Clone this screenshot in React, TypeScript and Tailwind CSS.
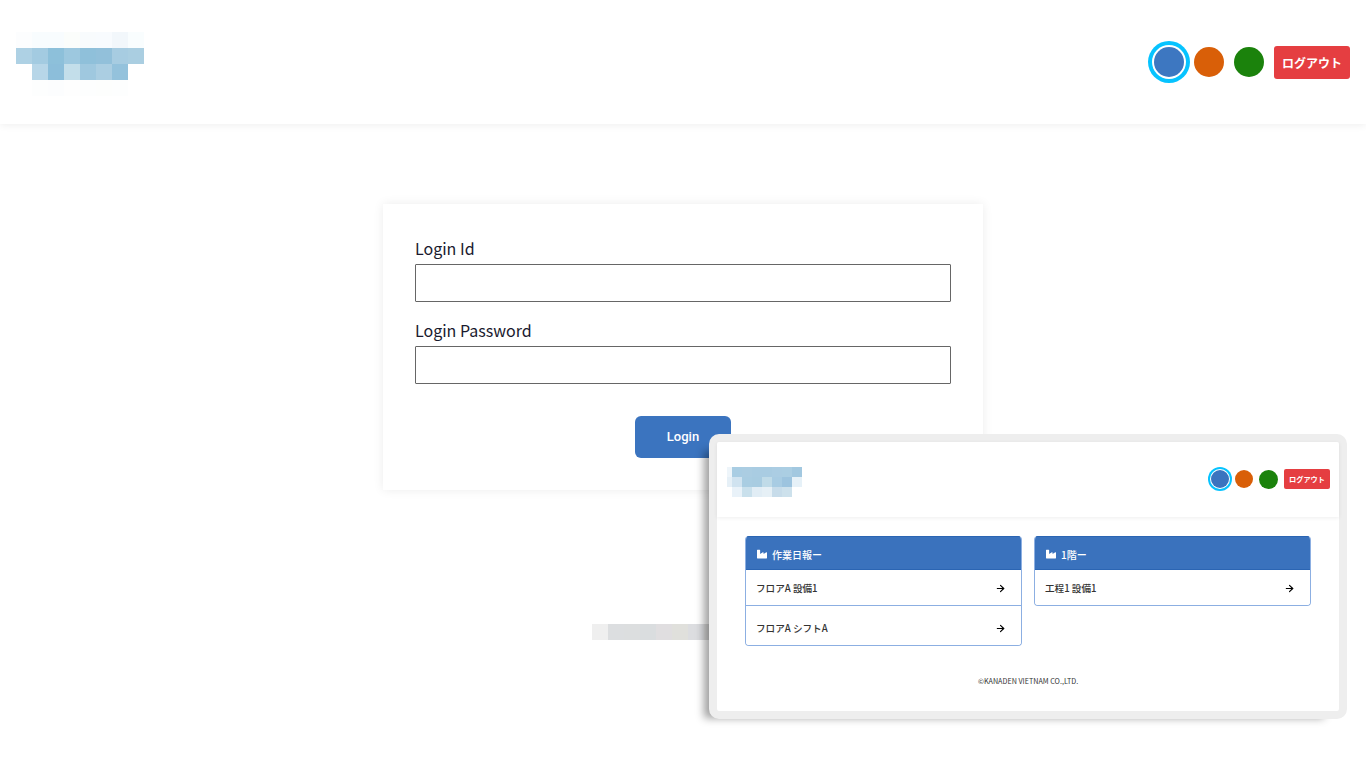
import { ArrowRight } from "lucide-react";
import { FaIndustry } from "react-icons/fa";

const jp = "font-['Noto_Sans_CJK_JP','Noto_Sans',sans-serif]";

function Mosaic({ w, h, cell, rows, className }: { w: number; h: number; cell: number; rows: [number, number, string[]][]; className?: string }) {
  return (
    <svg width={w} height={h} viewBox={`0 0 ${w} ${h}`} className={className} shapeRendering="crispEdges">
      {rows.map(([x, y, colors], r) =>
        colors.map((c, i) => <rect key={`${r}-${i}`} x={x + i * cell} y={y} width={cell} height={cell} fill={c} />)
      )}
    </svg>
  );
}

function Card({ title, rows }: { title: string; rows: [string, number][] }) {
  return (
    <div className="w-[277px] rounded-[4px] overflow-hidden border border-[#8cafe2] border-t-0 self-start">
      <div className="h-[34px] bg-[#3a72bd] border-y border-[#2b65b3] -mx-px pl-[12px] pt-[2px] flex items-center gap-[5px] text-white text-[10px] font-medium">
        <FaIndustry className="w-[10px] h-[10px]" />
        <span>{title}</span>
      </div>
      {rows.map(([label, height], i) => (
        <div
          key={label}
          style={{ height }}
          className={`flex items-center justify-between pl-[10px] pr-[15px] bg-white text-[9.6px] font-medium text-[#333] ${i > 0 ? "border-t border-[#8cafe2] pt-[6px]" : "pt-px"}`}
        >
          <span>{label}</span>
          <ArrowRight className="w-[11px] h-[11px] text-black" strokeWidth={2.5} />
        </div>
      ))}
    </div>
  );
}

export default function App() {
  return (
    <div className={`relative h-[768px] overflow-hidden bg-white ${jp}`}>
      <header className="h-[124px] bg-white shadow-[0_1px_8px_rgba(0,0,0,0.07)] flex justify-between items-start pl-[16px] pr-[16px]">
        <Mosaic
          w={128}
          h={64}
          cell={16}
          className="mt-[32px]"
          rows={[
            [0, 0, ["#fcfdfe", "#f8fcfe", "#f8fcfe", "#fbfdfb", "#f8fbfd", "#f8fbfe", "#f2f7fb", "#f9fdfe"]],
            [0, 16, ["#aed1e4", "#a3cbe1", "#8dc0da", "#9dc8df", "#8fc0da", "#92c0da", "#a7cce1", "#aacee1"]],
            [16, 32, ["#b7d6e8", "#8cbeda", "#c3deea", "#9fc8df", "#abcee2", "#94c2dc"]],
            [16, 48, ["#fdfefe", "#fcfdfe", "#fefefe", "#fdfefe", "#fdfefd", "#fdfefe"]],
          ]}
        />
        <div className="flex items-start gap-[10px] mt-[46px]">
          <div className="w-[30px] h-[30px] mt-px rounded-full bg-[#3d77c1] shadow-[0_0_0_2px_#fff,0_0_0_6px_#06c3ff]" />
          <div className="w-[30px] h-[30px] mt-px rounded-full bg-[#d95f08]" />
          <div className="w-[30px] h-[30px] mt-px rounded-full bg-[#1b820c]" />
          <button className="w-[76px] h-[33px] rounded-[3px] bg-[#e53e41] text-white text-[12px] font-bold">ログアウト</button>
        </div>
      </header>

      <main className="flex flex-col items-center">
        <form className="mt-[80px] w-[600px] h-[286px] bg-white shadow-[0_0_10px_rgba(0,0,0,0.08)] px-[32px] pt-[32px] text-[#1a1a2e]">
          <label className="block text-[16px] leading-[24px] mb-[4px]">Login Id</label>
          <input className="block w-full h-[38px] border border-[#666] rounded-[1px] bg-white" />
          <label className="block text-[16px] leading-[24px] mt-[16px] mb-[4px]">Login Password</label>
          <input className="block w-full h-[38px] border border-[#666] rounded-[1px] bg-white" />
          <div className="flex justify-center mt-[32px]">
            <button type="button" className="w-[96px] h-[42px] rounded-[6px] bg-[#3b74bf] text-white text-[13px] font-medium font-['Roboto',sans-serif]">
              Login
            </button>
          </div>
        </form>
        <Mosaic
          w={192}
          h={16}
          cell={16}
          className="mt-[134px] ml-[10px]"
          rows={[[0, 0, ["#efefef", "#dcdee0", "#dcdedf", "#dadddf", "#e0dee0", "#e0e0dc", "#dcdde0", "#dcdcdc"]]]}
        />
      </main>

      <div className="absolute left-[709px] top-[434px] w-[638px] h-[285px] border-[8px] border-[#eeeeee] rounded-[10px] bg-white shadow-[-14px_8px_9px_-9px_rgba(0,0,0,0.38)] flex flex-col">
        <div className="h-[75px] shrink-0 flex justify-between items-start pl-[10px] pr-[9px] shadow-[0_1px_4px_rgba(0,0,0,0.07)]">
          <Mosaic
            w={75}
            h={30}
            cell={10}
            className="mt-[25px]"
            rows={[
              [-5, 0, ["#eef5fa", "#a9cde3", "#abcde2", "#a9cce2", "#a9cce2", "#abcde3", "#abcee3", "#a2c8e0"]],
              [-5, 10, ["#e6f0f7", "#d0e3f0", "#a9cde2", "#a8cce1", "#c0dbe8", "#a8cce3", "#9dc4df", "#e6f1f8"]],
              [5, 20, ["#e9f2f9", "#c9e0ec", "#e1edf5", "#e6f0f6", "#c7dcea", "#cde1ec"]],
            ]}
          />
          <div className="flex items-center gap-[6px] mt-[27px]">
            <div className="w-[18px] h-[18px] rounded-full bg-[#3b74bf] shadow-[0_0_0_1px_#fff,0_0_0_3px_#06c3ff]" />
            <div className="w-[18px] h-[18px] rounded-full bg-[#d95f08]" />
            <div className="w-[19px] h-[19px] rounded-full bg-[#1b820c]" />
            <button className="w-[46px] h-[20px] rounded-[2px] bg-[#e53e41] text-white text-[7.2px] font-bold">ログアウト</button>
          </div>
        </div>
        <div className="flex gap-[12px] pl-[28px] pt-[19px]">
          <Card title="作業日報ー" rows={[["フロアA 設備1", 35], ["フロアA シフトA", 40]]} />
          <Card title="1階ー" rows={[["工程1 設備1", 35]]} />
        </div>
        <p className="absolute left-[261px] top-[233px] text-[7.2px] leading-[12px] text-[#333]">©KANADEN VIETNAM CO.,LTD.</p>
      </div>
    </div>
  );
}
